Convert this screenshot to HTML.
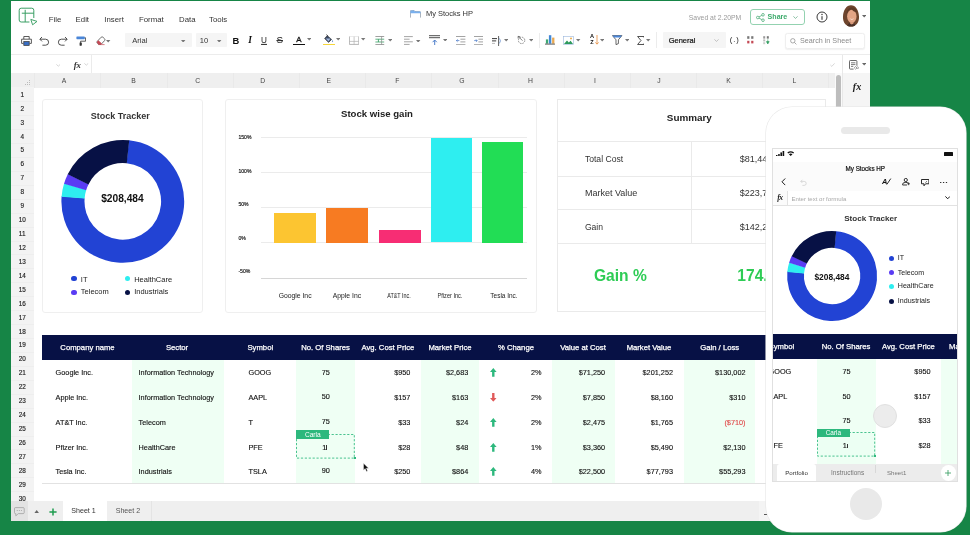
<!DOCTYPE html>
<html><head><meta charset="utf-8"><title>My Stocks HP</title>
<style>
*{box-sizing:border-box;margin:0;padding:0}
html,body{width:970px;height:535px;overflow:hidden}
body{background:#168546;font-family:"Liberation Sans",sans-serif;position:relative;color:#222}
.a{position:absolute}
.t{position:absolute;line-height:1;white-space:nowrap}
.c{transform:translate(-50%,-50%)}
.l{transform:translate(0,-50%)}
.r{transform:translate(-100%,-50%)}
.b{font-weight:bold}
#win{position:absolute;left:11px;top:1.3px;width:859px;height:519.4px;background:#fff;overflow:hidden}
#stage{will-change:transform;position:absolute;left:-11px;top:-1.3px;width:970px;height:535px}
.menu{font-size:7.8px;color:#333}
.rn{font-size:6.4px;color:#222;-webkit-text-stroke-width:0.15px}
.cn{font-size:6.8px;color:#444}
.card{position:absolute;background:#fff;border:1px solid #efefef;border-radius:3px}
.th{font-size:7.7px;color:#fff;-webkit-text-stroke-width:0.25px}
.td{font-size:7.3px;color:#111;-webkit-text-stroke-width:0.12px}
.lg{font-size:7.5px;color:#222}
.xl{font-size:6.8px;color:#222}
.yl{font-size:5.1px;color:#111;-webkit-text-stroke-width:0.15px}
.sm{font-size:8.6px;color:#333}
.pt{font-size:6.3px;color:#111;-webkit-text-stroke-width:0.2px}
</style></head>
<body>
<div id="win"><div id="stage">
<svg class="a" style="left:17.5px;top:7px;" width="20" height="19" viewBox="0 0 20 19">
<rect x="1.2" y="1.2" width="14.6" height="13.8" rx="2" fill="none" stroke="#3a9f64" stroke-width="1"/>
<path d="M3.8 6.2H15.8M7.2 2.8V15" stroke="#3a9f64" stroke-width="1" fill="none"/>
<rect x="11.4" y="11" width="8" height="7.6" fill="#fff"/>
<path d="M12.8 12.4L19 14.4L14.6 17.8z" fill="#fff" stroke="#3a9f64" stroke-width="0.95" stroke-linejoin="round"/>
</svg>
<div class="t l menu" style="left:48.7px;top:20px;">File</div>
<div class="t l menu" style="left:75.6px;top:20px;">Edit</div>
<div class="t l menu" style="left:104.3px;top:20px;">Insert</div>
<div class="t l menu" style="left:139px;top:20px;">Format</div>
<div class="t l menu" style="left:179px;top:20px;">Data</div>
<div class="t l menu" style="left:209px;top:20px;">Tools</div>
<svg class="a" style="left:410px;top:10px;" width="11" height="8" viewBox="0 0 11 8">
<path d="M0.4 7.6V1.2Q0.4 0.4 1.2 0.4H4L5 1.6H9.8Q10.6 1.6 10.6 2.4V7.6" fill="#fff" stroke="#7a8899" stroke-width="0.7"/>
<path d="M0.4 3.2V1.2Q0.4 0.4 1.2 0.4H4L5 1.6H9.8Q10.6 1.6 10.6 2.4V3.2z" fill="#79b0ee"/>
</svg>
<div class="t l " style="left:425.9px;top:14.2px;font-size:7.5px;color:#333">My Stocks HP</div>
<div class="t l " style="left:688.8px;top:18.4px;font-size:6.85px;color:#9a9a9a">Saved at 2.20PM</div>
<div class="a" style="left:750px;top:8.8px;width:55.4px;height:16.4px;border:0.8px solid #93d2b0;border-radius:3px;background:#fff"></div>
<svg class="a" style="left:756px;top:13px;" width="9" height="9" viewBox="0 0 9 9">
<circle cx="7" cy="1.8" r="1.3" fill="none" stroke="#3aa468" stroke-width="0.7"/>
<circle cx="7" cy="7.2" r="1.3" fill="none" stroke="#3aa468" stroke-width="0.7"/>
<circle cx="1.8" cy="4.5" r="1.3" fill="none" stroke="#3aa468" stroke-width="0.7"/>
<path d="M3 3.9L5.8 2.4M3 5.1L5.8 6.6" fill="none" stroke="#3aa468" stroke-width="0.7"/>
</svg>
<div class="t l b" style="left:767.6px;top:17.6px;font-size:7.1px;color:#3dab6c">Share</div>
<svg class="a" style="left:793.2px;top:16.2px;" width="5" height="3" viewBox="0 0 5 3"><path d="M0.4 0.4L2.5 2.4L4.6 0.4" fill="none" stroke="#5aa880" stroke-width="0.7"/></svg>
<svg class="a" style="left:816px;top:11.2px;" width="12" height="12" viewBox="0 0 12 12"><circle cx="6" cy="6" r="5" fill="none" stroke="#222" stroke-width="0.9"/>
<path d="M6 5.2V8.8" stroke="#222" stroke-width="1"/><circle cx="6" cy="3.5" r="0.65" fill="#222"/></svg>
<svg class="a" style="left:841.6px;top:4.6px;" width="18" height="22" viewBox="0 0 18 22">
<defs><clipPath id="av"><path d="M9 0.3C13.6 0.3 16.6 5 17 11.4C17.4 17.6 13.6 21.6 9 21.6C4.4 21.6 0.6 17.6 1 11.4C1.4 5 4.4 0.3 9 0.3z"/></clipPath></defs>
<g clip-path="url(#av)">
<rect width="18" height="22" fill="#6e452d"/>
<ellipse cx="9.8" cy="11.4" rx="4.7" ry="6.6" fill="#e3a585"/>
<path d="M4.6 10Q5.4 4.6 9.4 4.2Q11 6.6 15 7.4Q14.6 2.4 9.6 2.2Q4.4 2.6 4.6 10z" fill="#5e3a26"/>
<path d="M7.4 13.6Q9.8 15.8 12.4 13.6Q9.8 14.4 7.4 13.6z" fill="#fbeee8"/>
<path d="M5 22Q5.4 18.4 8.4 17.8L9.8 18.8L11.4 17.8Q13.6 18.6 13.8 22z" fill="#4a3128"/>
<path d="M8.2 16.8Q9.8 18 11.4 16.8L11.6 18.6L9.8 19.6L8 18.6z" fill="#d89878"/>
</g></svg>
<svg class="a" style="left:861.8px;top:15.0px;" width="4.4" height="2.6" viewBox="0 0 4.4 2.6"><path d="M0 0h4.4L2.2 2.6z" fill="#666"/></svg>
<div class="a" style="left:11px;top:53.6px;width:859px;height:1px;background:#ececec"></div>
<svg class="a" style="left:20.5px;top:35.5px;" width="11" height="10" viewBox="0 0 11 10">
<path d="M2.8 3V0.5H8.2V3" fill="none" stroke="#333" stroke-width="0.8"/>
<path d="M2.4 7.4H0.6V3.2H10.4V7.4H8.6" fill="none" stroke="#333" stroke-width="0.8"/>
<rect x="2.8" y="5.6" width="5.4" height="3.8" fill="#3a6fc4" stroke="#333" stroke-width="0.7"/></svg>
<svg class="a" style="left:38.5px;top:35.8px;" width="11" height="10" viewBox="0 0 11 10"><path d="M1 3.2H6.6A3 3 0 0 1 6.6 9.2H3.4" fill="none" stroke="#333" stroke-width="0.85"/>
<path d="M3 1L0.8 3.2L3 5.4" fill="none" stroke="#333" stroke-width="0.85"/></svg>
<svg class="a" style="left:56.8px;top:35.8px;" width="11" height="10" viewBox="0 0 11 10"><path d="M10 3.2H4.4A3 3 0 0 0 4.4 9.2H7.6" fill="none" stroke="#333" stroke-width="0.85"/>
<path d="M8 1L10.2 3.2L8 5.4" fill="none" stroke="#333" stroke-width="0.85"/></svg>
<svg class="a" style="left:75.6px;top:35.6px;" width="10" height="10" viewBox="0 0 10 10"><rect x="0.4" y="0.4" width="8.4" height="2.8" rx="0.6" fill="#4a86d8"/>
<path d="M8.8 1.8H9.6V5.2H4.6V9.6" fill="none" stroke="#333" stroke-width="0.8"/>
<path d="M3.6 6.6H5.8V9.6H3.6z" fill="#333"/></svg>
<svg class="a" style="left:96.2px;top:35.6px;" width="10" height="10" viewBox="0 0 10 10"><path d="M5.2 1.2Q6 0.4 6.9 1.2L8.6 2.8Q9.4 3.7 8.6 4.6L5 8.4H2.6L1.2 7Q0.6 6.2 1.2 5.4z" fill="#fff" stroke="#444" stroke-width="0.75" stroke-linejoin="round"/>
<path d="M2.4 4.2L5.8 7.4L5 8.4H2.6L1.2 7Q0.6 6.2 1.2 5.4z" fill="#c44a55"/>
<path d="M2.4 8.6H8.6" stroke="#c44a55" stroke-width="0.7"/></svg>
<svg class="a" style="left:106.3px;top:40.0px;" width="4.4" height="2.6" viewBox="0 0 4.4 2.6"><path d="M0 0h4.4L2.2 2.6z" fill="#777"/></svg>
<div class="a" style="left:125.3px;top:32.9px;width:67.1px;height:14.6px;background:#f5f5f5;border-radius:1px"></div>
<div class="t l " style="left:132.2px;top:40.7px;font-size:7.6px;color:#333">Arial</div>
<svg class="a" style="left:181.4px;top:39.8px;" width="4.4" height="2.6" viewBox="0 0 4.4 2.6"><path d="M0 0h4.4L2.2 2.6z" fill="#777"/></svg>
<div class="a" style="left:196.2px;top:32.9px;width:31.2px;height:14.6px;background:#f5f5f5;border-radius:1px"></div>
<div class="t l " style="left:199.8px;top:40.7px;font-size:7.6px;color:#333">10</div>
<svg class="a" style="left:217.4px;top:39.8px;" width="4.4" height="2.6" viewBox="0 0 4.4 2.6"><path d="M0 0h4.4L2.2 2.6z" fill="#777"/></svg>
<div class="t c b" style="left:236px;top:40.8px;font-size:9.4px;color:#111">B</div>
<div class="t c " style="left:250px;top:41.4px;font-size:9.4px;color:#111;font-style:italic;font-family:'Liberation Serif',serif;font-weight:bold">I</div>
<div class="t c " style="left:264px;top:40.6px;font-size:8.2px;color:#222;text-decoration:underline">U</div>
<div class="t c " style="left:279.7px;top:40.4px;font-size:9.8px;color:#222;text-decoration:line-through">S</div>
<div class="t c " style="left:298.8px;top:39.5px;font-size:7.9px;color:#111;-webkit-text-stroke:0.3px #111">A</div>
<div class="a" style="left:292.9px;top:43.5px;width:12.3px;height:1.8px;background:#111"></div>
<svg class="a" style="left:306.5px;top:38.0px;" width="4.4" height="2.6" viewBox="0 0 4.4 2.6"><path d="M0 0h4.4L2.2 2.6z" fill="#777"/></svg>
<svg class="a" style="left:322.5px;top:33.5px;" width="13" height="10" viewBox="0 0 13 10"><path d="M4.2 1.6L8.6 5.4L5.6 8.4L1.6 4.6z" fill="#3b4a66" stroke="#333" stroke-width="0.6" stroke-linejoin="round"/>
<path d="M3.4 0.6L5 2.2" stroke="#333" stroke-width="0.8"/>
<path d="M2.6 4.4L7.4 4.6L5.6 7.4z" fill="#9fb4d8"/>
<path d="M9.6 6Q10.6 7.6 9.6 8.2Q8.6 7.6 9.6 6z" fill="#3a6fc4"/></svg>
<div class="a" style="left:322.7px;top:43.9px;width:12.3px;height:1.4px;background:#f5d63a"></div>
<svg class="a" style="left:335.7px;top:38.0px;" width="4.4" height="2.6" viewBox="0 0 4.4 2.6"><path d="M0 0h4.4L2.2 2.6z" fill="#777"/></svg>
<svg class="a" style="left:348.8px;top:36.2px;" width="10.2" height="8.8" viewBox="0 0 10.2 8.8"><path d="M0.4 0.4V8.4H9.8V0.4" fill="none" stroke="#a2a2a2" stroke-width="0.8"/>
<path d="M0.4 5.4H9.8M5.1 0.4V8.4" stroke="#b0b0b0" stroke-width="0.7"/><path d="M0.4 0.4H9.8" stroke="#d8d8d8" stroke-width="0.6"/></svg>
<svg class="a" style="left:361.40000000000003px;top:38.4px;" width="4.4" height="2.6" viewBox="0 0 4.4 2.6"><path d="M0 0h4.4L2.2 2.6z" fill="#777"/></svg>
<svg class="a" style="left:375px;top:36px;" width="9.6" height="9" viewBox="0 0 9.6 9"><path d="M0.4 0.5H9.2M0.4 8.5H9.2" stroke="#777" stroke-width="0.7"/>
<path d="M0.4 3.2H9.2M0.4 6H9.2" stroke="#3a9f64" stroke-width="0.8"/>
<path d="M6.6 0.5V8.5" stroke="#888" stroke-width="0.7"/><path d="M3.4 3.2V6" stroke="#3a9f64" stroke-width="0.9"/></svg>
<svg class="a" style="left:387.8px;top:39.4px;" width="4.4" height="2.6" viewBox="0 0 4.4 2.6"><path d="M0 0h4.4L2.2 2.6z" fill="#777"/></svg>
<svg class="a" style="left:404.2px;top:36px;" width="9" height="9" viewBox="0 0 9 9"><path d="M0 0.6H8.8M0 3.2H5.6M0 5.8H8.8M0 8.4H5.6" stroke="#9a9a9a" stroke-width="0.9"/></svg>
<svg class="a" style="left:416.40000000000003px;top:39.599999999999994px;" width="4.4" height="2.6" viewBox="0 0 4.4 2.6"><path d="M0 0h4.4L2.2 2.6z" fill="#777"/></svg>
<svg class="a" style="left:429px;top:34.8px;" width="11.4" height="10.6" viewBox="0 0 11.4 10.6"><path d="M0 0.7H11.4M0 2.7H11.4" stroke="#111" stroke-width="0.75"/>
<path d="M5.7 10.2V5.4M3.6 7.2L5.7 5L7.8 7.2" fill="none" stroke="#3a6fc4" stroke-width="0.9"/></svg>
<svg class="a" style="left:442.8px;top:38.8px;" width="4.4" height="2.6" viewBox="0 0 4.4 2.6"><path d="M0 0h4.4L2.2 2.6z" fill="#777"/></svg>
<svg class="a" style="left:456px;top:35.6px;" width="9.6" height="9.4" viewBox="0 0 9.6 9.4"><path d="M0 0.5H9.4M4.4 3.2H9.4M4.4 5.9H9.4M0 8.7H9.4" stroke="#8a8a8a" stroke-width="0.8"/>
<path d="M3.4 4.6H0.4M1.6 3.4L0.4 4.6L1.6 5.8" fill="none" stroke="#3a6fc4" stroke-width="0.7"/></svg>
<svg class="a" style="left:473.9px;top:35.6px;" width="9.6" height="9.4" viewBox="0 0 9.6 9.4"><path d="M0 0.5H9.4M4.4 3.2H9.4M4.4 5.9H9.4M0 8.7H9.4" stroke="#8a8a8a" stroke-width="0.8"/>
<path d="M0.2 4.6H3.2M2 3.4L3.2 4.6L2 5.8" fill="none" stroke="#3a6fc4" stroke-width="0.7"/></svg>
<svg class="a" style="left:491.5px;top:35.6px;" width="10" height="10" viewBox="0 0 10 10"><path d="M0 2.6H5M0 4.9H4.2" stroke="#222" stroke-width="0.9"/><path d="M0 7.4H3" stroke="#aaa" stroke-width="0.8"/>
<path d="M6.6 0V10" stroke="#333" stroke-width="0.8"/><path d="M7.4 2.4Q9.6 4.8 7.4 7.4" fill="none" stroke="#5a88c8" stroke-width="0.7"/></svg>
<svg class="a" style="left:504.0px;top:39.0px;" width="4.4" height="2.6" viewBox="0 0 4.4 2.6"><path d="M0 0h4.4L2.2 2.6z" fill="#777"/></svg>
<svg class="a" style="left:517px;top:35.4px;" width="9.4" height="9.6" viewBox="0 0 9.4 9.6"><circle cx="4.6" cy="5.4" r="3.2" fill="none" stroke="#666" stroke-width="0.7" stroke-dasharray="1.6 0.9"/>
<path d="M1 1.4L5.6 5.6M1 1.4L1.2 3.6M1 1.4L3.2 1.6" fill="none" stroke="#555" stroke-width="0.7"/></svg>
<svg class="a" style="left:528.8px;top:39.0px;" width="4.4" height="2.6" viewBox="0 0 4.4 2.6"><path d="M0 0h4.4L2.2 2.6z" fill="#777"/></svg>
<div class="a" style="left:539.2px;top:33px;width:1px;height:15px;background:#ececec"></div>
<svg class="a" style="left:545px;top:35.2px;" width="10" height="9.6" viewBox="0 0 10 9.6"><rect x="0.9" y="4.4" width="2.3" height="4.2" fill="#3fa872"/><rect x="3.9" y="0.2" width="2.4" height="8.4" fill="#4288d6"/><rect x="7.1" y="2.6" width="2.3" height="6" fill="#e8a850"/>
<path d="M0 9.1H10" stroke="#333" stroke-width="0.8"/></svg>
<svg class="a" style="left:563.4px;top:36px;" width="11" height="9" viewBox="0 0 11 9"><rect x="0.4" y="0.4" width="10.2" height="8" fill="#fff" stroke="#9ab6dc" stroke-width="0.6"/>
<path d="M1 8L4 4.6L5.8 6.4L7.6 4.8L10 8z" fill="#2e9a5c"/><circle cx="8" cy="2.4" r="0.9" fill="#e6a03a"/></svg>
<svg class="a" style="left:576.4px;top:39.199999999999996px;" width="4.4" height="2.6" viewBox="0 0 4.4 2.6"><path d="M0 0h4.4L2.2 2.6z" fill="#777"/></svg>
<div class="t c b" style="left:592px;top:37.4px;font-size:5.6px;color:#111">A</div>
<div class="t c b" style="left:592px;top:43px;font-size:5.6px;color:#111">Z</div>
<svg class="a" style="left:594.6px;top:35.4px;" width="4" height="10" viewBox="0 0 4 10"><path d="M2 0V9M0.4 7.4L2 9.2L3.6 7.4" fill="none" stroke="#e68a3a" stroke-width="0.8"/></svg>
<svg class="a" style="left:600.0px;top:39.199999999999996px;" width="4.4" height="2.6" viewBox="0 0 4.4 2.6"><path d="M0 0h4.4L2.2 2.6z" fill="#777"/></svg>
<svg class="a" style="left:612.4px;top:35.4px;" width="10.4" height="10" viewBox="0 0 10.4 10"><path d="M0.5 0.6H9.9L6.4 4.8V8.6L4 9.6V4.8z" fill="#fff" stroke="#333" stroke-width="0.75" stroke-linejoin="round"/>
<path d="M0.5 0.6H9.9L8.4 2.4H2z" fill="#4a86d8"/></svg>
<svg class="a" style="left:624.5999999999999px;top:39.0px;" width="4.4" height="2.6" viewBox="0 0 4.4 2.6"><path d="M0 0h4.4L2.2 2.6z" fill="#777"/></svg>
<svg class="a" style="left:637px;top:36px;" width="7.4" height="9" viewBox="0 0 7.4 9"><path d="M7 1.6V0.5H0.6L4 4.5L0.6 8.5H7V7.4" fill="none" stroke="#333" stroke-width="0.85" stroke-linejoin="round"/></svg>
<svg class="a" style="left:646.4px;top:39.199999999999996px;" width="4.4" height="2.6" viewBox="0 0 4.4 2.6"><path d="M0 0h4.4L2.2 2.6z" fill="#777"/></svg>
<div class="a" style="left:656.2px;top:32px;width:1px;height:16px;background:#ececec"></div>
<div class="a" style="left:662.6px;top:32.4px;width:63.1px;height:15.2px;background:#f5f5f5;border-radius:1px"></div>
<div class="t l " style="left:668.7px;top:40.9px;font-size:7.5px;color:#111;-webkit-text-stroke-width:0.2px">General</div>
<svg class="a" style="left:713.6px;top:39.2px;" width="5" height="3" viewBox="0 0 5 3"><path d="M0.4 0.4L2.5 2.4L4.6 0.4" fill="none" stroke="#aaa" stroke-width="0.7"/></svg>
<div class="t c " style="left:734.8px;top:40.2px;font-size:7.6px;color:#222;letter-spacing:0.9px">(.)</div>
<svg class="a" style="left:746.8px;top:36.4px;" width="7" height="8" viewBox="0 0 7 8"><rect x="0.2" y="0.2" width="2.2" height="2.6" fill="#777"/><rect x="4.2" y="0.2" width="2.2" height="2.6" fill="#777"/>
<rect x="0.2" y="4.8" width="2.2" height="2.6" fill="#c44a55"/><rect x="4.2" y="4.8" width="2.2" height="2.6" fill="#c44a55"/></svg>
<svg class="a" style="left:763.4px;top:36px;" width="7" height="9" viewBox="0 0 7 9"><rect x="0.2" y="0.2" width="2" height="2.4" fill="#999"/><rect x="3.8" y="0.2" width="2" height="2.4" fill="#777"/>
<rect x="0.2" y="3.4" width="2" height="2" fill="#bbb"/><rect x="0.2" y="6.2" width="2" height="2" fill="#ccc"/>
<path d="M4.8 3.4V6M3.4 5.6H6.2L4.8 8z" fill="#2e9a5c" stroke="#2e9a5c" stroke-width="0.6"/></svg>
<div class="a" style="left:784.8px;top:33.3px;width:80.4px;height:15.4px;background:#fff;border:1px solid #efefef;border-radius:2.5px;box-shadow:0 0.5px 1.2px rgba(0,0,0,0.06)"></div>
<svg class="a" style="left:789.6px;top:37.8px;" width="7" height="7" viewBox="0 0 7 7"><circle cx="2.8" cy="2.8" r="2.2" fill="none" stroke="#888" stroke-width="0.7"/><path d="M4.4 4.4L6.4 6.4" stroke="#888" stroke-width="0.7"/></svg>
<div class="t l " style="left:800px;top:41.2px;font-size:7.2px;color:#8a8a8a">Search in Sheet</div>
<svg class="a" style="left:55.8px;top:63.6px;" width="4.6" height="3" viewBox="0 0 4.6 3"><path d="M0.4 0.4L2.3 2.2L4.2 0.4" fill="none" stroke="#bbb" stroke-width="0.6"/></svg>
<div class="t c " style="left:77.2px;top:64.9px;font-size:8.8px;color:#333;font-style:italic;font-weight:bold;font-family:'Liberation Serif',serif;letter-spacing:-0.2px">fx</div>
<svg class="a" style="left:84.2px;top:63.4px;" width="4.6" height="3" viewBox="0 0 4.6 3"><path d="M0.4 0.4L2.3 2.2L4.2 0.4" fill="none" stroke="#bbb" stroke-width="0.6"/></svg>
<div class="a" style="left:91.2px;top:54.6px;width:1px;height:18.4px;background:#ebebeb"></div>
<svg class="a" style="left:830.4px;top:62.8px;" width="5" height="4" viewBox="0 0 5 4"><path d="M0.4 2L1.8 3.4L4.6 0.4" fill="none" stroke="#bdbdbd" stroke-width="0.6"/></svg>
<div class="a" style="left:842.4px;top:73px;width:27.6px;height:428px;background:#f5f5f5"></div>
<div class="a" style="left:842px;top:54.6px;width:1px;height:446.4px;background:#e8e8e8"></div>
<svg class="a" style="left:848.6px;top:60px;" width="10" height="10" viewBox="0 0 10 10"><rect x="0.5" y="0.5" width="7.4" height="8.6" rx="0.8" fill="#fff" stroke="#444" stroke-width="0.8"/>
<path d="M2 2.8H6.4M2 4.6H6.4M2 6.4H4.4" stroke="#444" stroke-width="0.7"/>
<rect x="4.6" y="5.8" width="5.4" height="4.2" fill="#fff"/>
<path d="M5.2 7.8L6.6 6.4L8 7.8L6.6 9.2zM7.4 7.8L8.6 6.6L9.8 7.8L8.6 9z" fill="none" stroke="#555" stroke-width="0.5"/></svg>
<svg class="a" style="left:861.8px;top:63.39999999999999px;" width="4.4" height="2.6" viewBox="0 0 4.4 2.6"><path d="M0 0h4.4L2.2 2.6z" fill="#666"/></svg>
<div class="t c " style="left:857.2px;top:86.6px;font-size:10.2px;color:#222;font-style:italic;font-weight:bold;font-family:'Liberation Serif',serif;letter-spacing:0.3px">fx</div>
<div class="a" style="left:11px;top:73px;width:824px;height:14.6px;background:#efefef"></div>
<div class="a" style="left:11px;top:87.2px;width:23.2px;height:414px;background:#f3f3f3"></div>
<svg class="a" style="left:24.6px;top:80.2px;" width="6" height="5" viewBox="0 0 6 5"><g fill="#bbb"><rect x="4" y="0" width="1" height="1"/><rect x="2" y="2" width="1" height="1"/><rect x="4" y="2" width="1" height="1"/><rect x="0" y="4" width="1" height="1"/><rect x="2" y="4" width="1" height="1"/><rect x="4" y="4" width="1" height="1"/></g></svg>
<div class="a" style="left:34.2px;top:73px;width:1px;height:14.6px;background:#e9e9e9"></div>
<div class="a" style="left:100.4px;top:73px;width:1px;height:14.6px;background:#e9e9e9"></div>
<div class="a" style="left:166.6px;top:73px;width:1px;height:14.6px;background:#e9e9e9"></div>
<div class="a" style="left:232.7px;top:73px;width:1px;height:14.6px;background:#e9e9e9"></div>
<div class="a" style="left:298.9px;top:73px;width:1px;height:14.6px;background:#e9e9e9"></div>
<div class="a" style="left:365.1px;top:73px;width:1px;height:14.6px;background:#e9e9e9"></div>
<div class="a" style="left:431.3px;top:73px;width:1px;height:14.6px;background:#e9e9e9"></div>
<div class="a" style="left:497.5px;top:73px;width:1px;height:14.6px;background:#e9e9e9"></div>
<div class="a" style="left:563.6px;top:73px;width:1px;height:14.6px;background:#e9e9e9"></div>
<div class="a" style="left:629.8px;top:73px;width:1px;height:14.6px;background:#e9e9e9"></div>
<div class="a" style="left:696.0px;top:73px;width:1px;height:14.6px;background:#e9e9e9"></div>
<div class="a" style="left:762.2px;top:73px;width:1px;height:14.6px;background:#e9e9e9"></div>
<div class="a" style="left:828.4px;top:73px;width:1px;height:14.6px;background:#e9e9e9"></div>
<div class="t c cn" style="left:64px;top:80.9px;">A</div>
<div class="t c cn" style="left:133.5px;top:80.9px;">B</div>
<div class="t c cn" style="left:197.8px;top:80.9px;">C</div>
<div class="t c cn" style="left:262.8px;top:80.9px;">D</div>
<div class="t c cn" style="left:328.7px;top:80.9px;">E</div>
<div class="t c cn" style="left:397.3px;top:80.9px;">F</div>
<div class="t c cn" style="left:462px;top:80.9px;">G</div>
<div class="t c cn" style="left:530.5px;top:80.9px;">H</div>
<div class="t c cn" style="left:595px;top:80.9px;">I</div>
<div class="t c cn" style="left:659px;top:80.9px;">J</div>
<div class="t c cn" style="left:728.5px;top:80.9px;">K</div>
<div class="t c cn" style="left:794.5px;top:80.9px;">L</div>
<div class="t c rn" style="left:22.2px;top:94.7px;">1</div>
<div class="a" style="left:11px;top:101.2px;width:23.2px;height:1px;background:#eeeeee"></div>
<div class="t c rn" style="left:22.2px;top:108.6px;">2</div>
<div class="a" style="left:11px;top:115.1px;width:23.2px;height:1px;background:#eeeeee"></div>
<div class="t c rn" style="left:22.2px;top:122.6px;">3</div>
<div class="a" style="left:11px;top:129.1px;width:23.2px;height:1px;background:#eeeeee"></div>
<div class="t c rn" style="left:22.2px;top:136.5px;">4</div>
<div class="a" style="left:11px;top:143.0px;width:23.2px;height:1px;background:#eeeeee"></div>
<div class="t c rn" style="left:22.2px;top:150.4px;">5</div>
<div class="a" style="left:11px;top:156.9px;width:23.2px;height:1px;background:#eeeeee"></div>
<div class="t c rn" style="left:22.2px;top:164.4px;">6</div>
<div class="a" style="left:11px;top:170.9px;width:23.2px;height:1px;background:#eeeeee"></div>
<div class="t c rn" style="left:22.2px;top:178.3px;">7</div>
<div class="a" style="left:11px;top:184.8px;width:23.2px;height:1px;background:#eeeeee"></div>
<div class="t c rn" style="left:22.2px;top:192.2px;">8</div>
<div class="a" style="left:11px;top:198.7px;width:23.2px;height:1px;background:#eeeeee"></div>
<div class="t c rn" style="left:22.2px;top:206.1px;">9</div>
<div class="a" style="left:11px;top:212.6px;width:23.2px;height:1px;background:#eeeeee"></div>
<div class="t c rn" style="left:22.2px;top:220.1px;">10</div>
<div class="a" style="left:11px;top:226.6px;width:23.2px;height:1px;background:#eeeeee"></div>
<div class="t c rn" style="left:22.2px;top:234.0px;">11</div>
<div class="a" style="left:11px;top:240.5px;width:23.2px;height:1px;background:#eeeeee"></div>
<div class="t c rn" style="left:22.2px;top:247.9px;">12</div>
<div class="a" style="left:11px;top:254.4px;width:23.2px;height:1px;background:#eeeeee"></div>
<div class="t c rn" style="left:22.2px;top:261.9px;">13</div>
<div class="a" style="left:11px;top:268.4px;width:23.2px;height:1px;background:#eeeeee"></div>
<div class="t c rn" style="left:22.2px;top:275.8px;">14</div>
<div class="a" style="left:11px;top:282.3px;width:23.2px;height:1px;background:#eeeeee"></div>
<div class="t c rn" style="left:22.2px;top:289.7px;">15</div>
<div class="a" style="left:11px;top:296.2px;width:23.2px;height:1px;background:#eeeeee"></div>
<div class="t c rn" style="left:22.2px;top:303.6px;">16</div>
<div class="a" style="left:11px;top:310.1px;width:23.2px;height:1px;background:#eeeeee"></div>
<div class="t c rn" style="left:22.2px;top:317.6px;">17</div>
<div class="a" style="left:11px;top:324.1px;width:23.2px;height:1px;background:#eeeeee"></div>
<div class="t c rn" style="left:22.2px;top:331.5px;">18</div>
<div class="a" style="left:11px;top:338.0px;width:23.2px;height:1px;background:#eeeeee"></div>
<div class="t c rn" style="left:22.2px;top:345.4px;">19</div>
<div class="a" style="left:11px;top:351.9px;width:23.2px;height:1px;background:#eeeeee"></div>
<div class="t c rn" style="left:22.2px;top:359.4px;">20</div>
<div class="a" style="left:11px;top:365.9px;width:23.2px;height:1px;background:#eeeeee"></div>
<div class="t c rn" style="left:22.2px;top:373.3px;">21</div>
<div class="a" style="left:11px;top:379.8px;width:23.2px;height:1px;background:#eeeeee"></div>
<div class="t c rn" style="left:22.2px;top:387.2px;">22</div>
<div class="a" style="left:11px;top:393.7px;width:23.2px;height:1px;background:#eeeeee"></div>
<div class="t c rn" style="left:22.2px;top:401.2px;">23</div>
<div class="a" style="left:11px;top:407.7px;width:23.2px;height:1px;background:#eeeeee"></div>
<div class="t c rn" style="left:22.2px;top:415.1px;">24</div>
<div class="a" style="left:11px;top:421.6px;width:23.2px;height:1px;background:#eeeeee"></div>
<div class="t c rn" style="left:22.2px;top:429.0px;">25</div>
<div class="a" style="left:11px;top:435.5px;width:23.2px;height:1px;background:#eeeeee"></div>
<div class="t c rn" style="left:22.2px;top:442.9px;">26</div>
<div class="a" style="left:11px;top:449.4px;width:23.2px;height:1px;background:#eeeeee"></div>
<div class="t c rn" style="left:22.2px;top:456.9px;">27</div>
<div class="a" style="left:11px;top:463.4px;width:23.2px;height:1px;background:#eeeeee"></div>
<div class="t c rn" style="left:22.2px;top:470.8px;">28</div>
<div class="a" style="left:11px;top:477.3px;width:23.2px;height:1px;background:#eeeeee"></div>
<div class="t c rn" style="left:22.2px;top:484.7px;">29</div>
<div class="a" style="left:11px;top:491.2px;width:23.2px;height:1px;background:#eeeeee"></div>
<div class="t c rn" style="left:22.2px;top:498.7px;">30</div>
<div class="a" style="left:11px;top:505.2px;width:23.2px;height:1px;background:#eeeeee"></div>
<div class="a" style="left:835px;top:73px;width:7px;height:428px;background:#fafafa"></div>
<div class="a" style="left:836px;top:75.2px;width:5px;height:470px;background:#bdbdbd;border-radius:2.5px"></div>
<div class="card" style="left:42.4px;top:98.8px;width:160.8px;height:214px"></div>
<div class="t c b" style="left:120.2px;top:115.6px;font-size:9px;color:#333">Stock Tracker</div>
<svg class="a" style="left:0;top:0" width="970" height="535"><path d="M128.90 140.30A61.4 61.4 0 1 1 61.62 196.26L84.63 198.20A38.3 38.3 0 1 0 126.60 163.29z" fill="#2243d4"/><path d="M61.58 196.69A61.4 61.4 0 0 1 64.15 183.24L86.21 190.07A38.3 38.3 0 0 0 84.61 198.46z" fill="#2eeef0"/><path d="M64.02 183.65A61.4 61.4 0 0 1 67.90 173.91L88.55 184.25A38.3 38.3 0 0 0 86.13 190.33z" fill="#5a3cf4"/><path d="M67.71 174.29A61.4 61.4 0 0 1 129.22 140.34L126.80 163.31A38.3 38.3 0 0 0 88.44 184.49z" fill="#071145"/></svg>
<div class="t c b" style="left:122.4px;top:198.8px;font-size:10.2px;color:#111">$208,484</div>
<div class="a" style="left:71.4px;top:276.1px;width:5.4px;height:5.4px;background:#2243d4;border-radius:50%"></div>
<div class="t l lg" style="left:80.8px;top:279.8px;">IT</div>
<div class="a" style="left:71.4px;top:289.6px;width:5.4px;height:5.4px;background:#5a3cf4;border-radius:50%"></div>
<div class="t l lg" style="left:80.8px;top:292.2px;">Telecom</div>
<div class="a" style="left:124.5px;top:276.1px;width:5.4px;height:5.4px;background:#2eeef0;border-radius:50%"></div>
<div class="t l lg" style="left:134.2px;top:279.8px;">HealthCare</div>
<div class="a" style="left:124.5px;top:289.6px;width:5.4px;height:5.4px;background:#071145;border-radius:50%"></div>
<div class="t l lg" style="left:134.2px;top:292.2px;">Industrials</div>
<div class="card" style="left:224.6px;top:98.8px;width:312px;height:214px"></div>
<div class="t c b" style="left:377px;top:113.9px;font-size:9.6px;color:#222">Stock wise gain</div>
<div class="a" style="left:260.8px;top:136.7px;width:266px;height:1px;background:#ebebeb"></div>
<div class="a" style="left:260.8px;top:171.9px;width:266px;height:1px;background:#ebebeb"></div>
<div class="a" style="left:260.8px;top:206.7px;width:266px;height:1px;background:#ebebeb"></div>
<div class="a" style="left:260.8px;top:241.8px;width:266px;height:1px;background:#ebebeb"></div>
<div class="a" style="left:260.8px;top:277.5px;width:266px;height:1px;background:#d6d6d6"></div>
<div class="t l yl" style="left:238.4px;top:137.5px;">150%</div>
<div class="t l yl" style="left:238.4px;top:172px;">100%</div>
<div class="t l yl" style="left:238.4px;top:205.1px;">50%</div>
<div class="t l yl" style="left:238.4px;top:239px;">0%</div>
<div class="t l yl" style="left:238.4px;top:272.2px;">-50%</div>
<div class="a" style="left:274.3px;top:212.7px;width:41.7px;height:29.9px;background:#fcc531"></div>
<div class="a" style="left:325.9px;top:207.6px;width:42.1px;height:35.0px;background:#f77b22"></div>
<div class="a" style="left:379px;top:229.8px;width:42.1px;height:12.8px;background:#f72d74"></div>
<div class="a" style="left:430.9px;top:138px;width:41.1px;height:103.8px;background:#2eeef0"></div>
<div class="a" style="left:482px;top:142.1px;width:41.1px;height:100.5px;background:#22dd55"></div>
<div class="t c xl" style="left:295.1px;top:295.8px;">Google Inc</div>
<div class="t c xl" style="left:346.9px;top:295.8px;">Apple Inc</div>
<div class="t c xl" style="left:399.4px;top:295.8px;transform:translate(-50%,-50%) scaleX(0.8)">AT&amp;T Inc.</div>
<div class="t c xl" style="left:450.2px;top:295.8px;transform:translate(-50%,-50%) scaleX(0.82)">Pfizer Inc.</div>
<div class="t c xl" style="left:503.5px;top:295.8px;transform:translate(-50%,-50%) scaleX(0.95)">Tesla Inc.</div>
<div class="card" style="left:556.8px;top:99px;width:269px;height:213.2px;border-radius:0;border-color:#eaeaea"></div>
<div class="a" style="left:557.3px;top:140.7px;width:268px;height:1px;background:#eaeaea"></div>
<div class="a" style="left:557.3px;top:175.8px;width:268px;height:1px;background:#eaeaea"></div>
<div class="a" style="left:557.3px;top:208.9px;width:268px;height:1px;background:#eaeaea"></div>
<div class="a" style="left:557.3px;top:242.9px;width:268px;height:1px;background:#eaeaea"></div>
<div class="a" style="left:691.1px;top:141.2px;width:1px;height:102.2px;background:#eaeaea"></div>
<div class="t c b" style="left:689.3px;top:117.5px;font-size:9.9px;color:#222">Summary</div>
<div class="t l sm" style="left:584.9px;top:159px;">Total Cost</div>
<div class="t l " style="left:739.7px;top:159px;font-size:9px;color:#333">$81,440</div>
<div class="t l sm" style="left:584.9px;top:192.7px;font-size:9px">Market Value</div>
<div class="t l " style="left:739.7px;top:192.7px;font-size:9px;color:#333">$223,705</div>
<div class="t l sm" style="left:584.9px;top:227.3px;">Gain</div>
<div class="t l " style="left:739.7px;top:227.3px;font-size:9px;color:#333">$142,265</div>
<div class="t l b" style="left:593.9px;top:275.6px;font-size:15.6px;color:#2ecc55">Gain %</div>
<div class="t l b" style="left:737.3px;top:275.6px;font-size:15.6px;color:#2ecc55">174.69%</div>
<div class="a" style="left:132px;top:360px;width:92px;height:123.3px;background:#effff4"></div>
<div class="a" style="left:296.4px;top:360px;width:58.8px;height:123.3px;background:#effff4"></div>
<div class="a" style="left:420.9px;top:360px;width:58.5px;height:123.3px;background:#effff4"></div>
<div class="a" style="left:551.8px;top:360px;width:62.8px;height:123.3px;background:#effff4"></div>
<div class="a" style="left:683.6px;top:360px;width:71.4px;height:123.3px;background:#effff4"></div>
<div class="a" style="left:42px;top:335px;width:830px;height:25.1px;background:#071145"></div>
<div class="a" style="left:42px;top:483px;width:830px;height:1px;background:#e2e2e2"></div>
<div class="t c th" style="left:87.5px;top:347.5px;">Company name</div>
<div class="t c th" style="left:177px;top:347.5px;">Sector</div>
<div class="t c th" style="left:260.3px;top:347.5px;">Symbol</div>
<div class="t c th" style="left:325.5px;top:347.5px;">No. Of Shares</div>
<div class="t c th" style="left:387.9px;top:347.5px;">Avg. Cost Price</div>
<div class="t c th" style="left:450px;top:347.5px;">Market Price</div>
<div class="t c th" style="left:516px;top:347.5px;">% Change</div>
<div class="t c th" style="left:583px;top:347.5px;">Value at Cost</div>
<div class="t c th" style="left:649px;top:347.5px;">Market Value</div>
<div class="t c th" style="left:719.7px;top:347.5px;">Gain / Loss</div>
<div class="t l td" style="left:55.6px;top:373.1px;">Google Inc.</div>
<div class="t l td" style="left:55.6px;top:398px;">Apple Inc.</div>
<div class="t l td" style="left:55.6px;top:422.9px;">AT&amp;T Inc.</div>
<div class="t l td" style="left:55.6px;top:447.8px;">Pfizer Inc.</div>
<div class="t l td" style="left:55.6px;top:471.9px;">Tesla Inc.</div>
<div class="t l td" style="left:138.6px;top:373.1px;">Information Technology</div>
<div class="t l td" style="left:138.6px;top:398px;">Information Technology</div>
<div class="t l td" style="left:138.6px;top:422.9px;">Telecom</div>
<div class="t l td" style="left:138.6px;top:447.8px;">HealthCare</div>
<div class="t l td" style="left:138.6px;top:471.9px;">Industrials</div>
<div class="t l td" style="left:248.5px;top:373.1px;">GOOG</div>
<div class="t l td" style="left:248.5px;top:398px;">AAPL</div>
<div class="t l td" style="left:248.5px;top:422.9px;">T</div>
<div class="t l td" style="left:248.5px;top:447.8px;">PFE</div>
<div class="t l td" style="left:248.5px;top:471.9px;">TSLA</div>
<div class="t c td" style="left:325.8px;top:372.5px;">75</div>
<div class="t c td" style="left:325.8px;top:397.4px;">50</div>
<div class="t c td" style="left:325.8px;top:422.29999999999995px;">75</div>
<div class="t c td" style="left:325.8px;top:447.2px;"></div>
<div class="t c td" style="left:325.8px;top:471.29999999999995px;">90</div>
<div class="t r td" style="left:410.4px;top:373.1px;">$950</div>
<div class="t r td" style="left:410.4px;top:398px;">$157</div>
<div class="t r td" style="left:410.4px;top:422.9px;">$33</div>
<div class="t r td" style="left:410.4px;top:447.8px;">$28</div>
<div class="t r td" style="left:410.4px;top:471.9px;">$250</div>
<div class="t r td" style="left:468.3px;top:373.1px;">$2,683</div>
<div class="t r td" style="left:468.3px;top:398px;">$163</div>
<div class="t r td" style="left:468.3px;top:422.9px;">$24</div>
<div class="t r td" style="left:468.3px;top:447.8px;">$48</div>
<div class="t r td" style="left:468.3px;top:471.9px;">$864</div>
<div class="t r td" style="left:541.6px;top:373.1px;">2%</div>
<div class="t r td" style="left:541.6px;top:398px;">2%</div>
<div class="t r td" style="left:541.6px;top:422.9px;">2%</div>
<div class="t r td" style="left:541.6px;top:447.8px;">1%</div>
<div class="t r td" style="left:541.6px;top:471.9px;">4%</div>
<div class="t r td" style="left:605.1px;top:373.1px;">$71,250</div>
<div class="t r td" style="left:605.1px;top:398px;">$7,850</div>
<div class="t r td" style="left:605.1px;top:422.9px;">$2,475</div>
<div class="t r td" style="left:605.1px;top:447.8px;">$3,360</div>
<div class="t r td" style="left:605.1px;top:471.9px;">$22,500</div>
<div class="t r td" style="left:673px;top:373.1px;">$201,252</div>
<div class="t r td" style="left:673px;top:398px;">$8,160</div>
<div class="t r td" style="left:673px;top:422.9px;">$1,765</div>
<div class="t r td" style="left:673px;top:447.8px;">$5,490</div>
<div class="t r td" style="left:673px;top:471.9px;">$77,793</div>
<div class="t r td" style="left:745.5px;top:373.1px;">$130,002</div>
<div class="t r td" style="left:745.5px;top:398px;">$310</div>
<div class="t r td" style="left:745.5px;top:422.9px;color:#e04a4a">($710)</div>
<div class="t r td" style="left:745.5px;top:447.8px;">$2,130</div>
<div class="t r td" style="left:745.5px;top:471.9px;">$55,293</div>
<svg class="a" style="left:490.4px;top:368.1px;" width="6.6" height="8.8" viewBox="0 0 6.6 8.8"><path d="M3.3 0L6.6 3.9H4.5V8.8H2.1V3.9H0z" fill="#2db87d"/></svg>
<svg class="a" style="left:490.4px;top:393.0px;transform:rotate(180deg);" width="6.6" height="8.8" viewBox="0 0 6.6 8.8"><path d="M3.3 0L6.6 3.9H4.5V8.8H2.1V3.9H0z" fill="#e05a5a"/></svg>
<svg class="a" style="left:490.4px;top:417.9px;" width="6.6" height="8.8" viewBox="0 0 6.6 8.8"><path d="M3.3 0L6.6 3.9H4.5V8.8H2.1V3.9H0z" fill="#2db87d"/></svg>
<svg class="a" style="left:490.4px;top:442.8px;" width="6.6" height="8.8" viewBox="0 0 6.6 8.8"><path d="M3.3 0L6.6 3.9H4.5V8.8H2.1V3.9H0z" fill="#2db87d"/></svg>
<svg class="a" style="left:490.4px;top:466.9px;" width="6.6" height="8.8" viewBox="0 0 6.6 8.8"><path d="M3.3 0L6.6 3.9H4.5V8.8H2.1V3.9H0z" fill="#2db87d"/></svg>
<svg class="a" style="left:295.4px;top:433.4px;" width="61" height="27" viewBox="0 0 61 27"><rect x="1.5" y="1.5" width="57.8" height="23.6" fill="none" stroke="#2db87d" stroke-width="0.85" stroke-dasharray="2.2 1.7"/></svg>
<div class="a" style="left:296.4px;top:430.4px;width:32.8px;height:8.4px;background:#2db87d"></div>
<div class="t c " style="left:312.8px;top:434.7px;font-size:6.6px;color:#fff">Carla</div>
<div class="a" style="left:353.6px;top:457.2px;width:2px;height:2px;background:#2db87d"></div>
<div class="t c td" style="left:324.2px;top:447.8px;">1</div>
<div class="a" style="left:326.2px;top:445.4px;width:0.8px;height:4.8px;background:#333"></div>
<svg class="a" style="left:363.4px;top:463px;" width="6" height="9" viewBox="0 0 6 9"><path d="M0.5 0.3V7.2L2.2 5.6L3.4 8.4L4.6 7.9L3.4 5.2H5.6z" fill="#111" stroke="#fff" stroke-width="0.4"/></svg>
<div class="a" style="left:11px;top:501px;width:859px;height:20.5px;background:#efefef"></div>
<div class="a" style="left:11px;top:501px;width:17px;height:20.5px;background:#e3e3e3"></div>
<svg class="a" style="left:14.4px;top:506.8px;" width="11" height="10" viewBox="0 0 11 10"><path d="M1.4 0.6H9.2Q10.2 0.6 10.2 1.6V5.6Q10.2 6.6 9.2 6.6H4.4L1.8 8.8V6.6H1.4Q0.5 6.6 0.5 5.6V1.6Q0.5 0.6 1.4 0.6z" fill="none" stroke="#999" stroke-width="0.7"/>
<circle cx="3.2" cy="3.6" r="0.5" fill="#999"/><circle cx="5.3" cy="3.6" r="0.5" fill="#999"/><circle cx="7.4" cy="3.6" r="0.5" fill="#999"/></svg>
<svg class="a" style="left:33.8px;top:509.6px;" width="5.4" height="3.6" viewBox="0 0 5.4 3.6"><path d="M0 3.6L2.7 0L5.4 3.6z" fill="#666"/></svg>
<svg class="a" style="left:49.2px;top:507.8px;" width="8" height="8" viewBox="0 0 8 8"><path d="M4 0.4V7.6M0.4 4H7.6" stroke="#1f9d50" stroke-width="1.5"/></svg>
<div class="a" style="left:62.8px;top:501px;width:44.4px;height:20.5px;background:#fff"></div>
<div class="t c " style="left:83.5px;top:512.3px;font-size:7.1px;color:#333">Sheet 1</div>
<div class="t c " style="left:127.9px;top:512.3px;font-size:7.1px;color:#555">Sheet 2</div>
<div class="a" style="left:151px;top:501px;width:1px;height:20.5px;background:#e4e4e4"></div>
<div class="a" style="left:759.2px;top:501px;width:12px;height:20.5px;background:#f4f4f4"></div>
<div class="a" style="left:764.4px;top:514.2px;width:2.6px;height:0.9px;background:#555"></div>
</div></div>
<div class="a" style="left:765.7px;top:106.6px;width:200.4px;height:425.1px;background:#fff;border-radius:26px;box-shadow:0 0 0 0.6px #e6e6e6"></div>
<div class="a" style="left:841.3px;top:126.8px;width:48.7px;height:7px;background:#e9e9e9;border-radius:3.5px"></div>
<div class="a" style="left:849.9px;top:487.9px;width:32.2px;height:32.2px;background:#e9e9e9;border-radius:50%"></div>
<div class="a" style="left:772.2px;top:147.7px;width:186.3px;height:334.1px;overflow:hidden;background:#fff;border:1px solid #e0e0e0">
<div class="a" style="will-change:transform;left:-773.2px;top:-148.7px;width:970px;height:535px">
<div class="a" style="left:773px;top:161.6px;width:186px;height:43.8px;background:#fbfbfb"></div>
<div class="a" style="left:787.2px;top:190.6px;width:172px;height:14.8px;background:#fff"></div>
<div class="a" style="left:773px;top:204.9px;width:186px;height:1px;background:#e2e2e2"></div>
<div class="a" style="left:786.6px;top:190.6px;width:0.8px;height:14.4px;background:#e2e2e2"></div>
<svg class="a" style="left:776.2px;top:151px;" width="9" height="5.4" viewBox="0 0 9 5.4"><g fill="#111"><rect x="0" y="4" width="1.5" height="1.4"/><rect x="2.2" y="3" width="1.5" height="2.4"/><rect x="4.4" y="1.4" width="1.6" height="4"/><rect x="6.6" y="0" width="1.6" height="5.4"/></g></svg>
<svg class="a" style="left:786.6px;top:151.2px;" width="7.4" height="5" viewBox="0 0 7.4 5"><path d="M0.3 1.6Q3.7 -1.2 7.1 1.6L6.2 2.5Q3.7 0.5 1.2 2.5zM1.9 3.2Q3.7 1.8 5.5 3.2L3.7 5z" fill="#111"/></svg>
<div class="a" style="left:944px;top:152.2px;width:9px;height:3.4px;background:#111;border-radius:0.6px"></div>
<div class="t c pt" style="left:865.3px;top:168.6px;">My Stocks HP</div>
<svg class="a" style="left:780.8px;top:178.2px;" width="5" height="7.6" viewBox="0 0 5 7.6"><path d="M4.2 0.5L1 3.8L4.2 7.1" fill="none" stroke="#111" stroke-width="0.95"/></svg>
<svg class="a" style="left:799.6px;top:178.6px;" width="7" height="7" viewBox="0 0 7 7"><path d="M0.8 2.4H4.2A2 2 0 0 1 4.2 6.4H2.4M2.4 0.8L0.8 2.4L2.4 4" fill="none" stroke="#ccc" stroke-width="0.7"/></svg>
<div class="t c " style="left:884.6px;top:182.2px;font-size:7.4px;color:#111;font-style:italic;font-weight:bold">A</div>
<svg class="a" style="left:886.2px;top:178.4px;" width="5.4" height="7" viewBox="0 0 5.4 7"><path d="M4.8 0.6L1 6.2L0.6 6.6" stroke="#111" stroke-width="0.9" fill="none"/></svg>
<svg class="a" style="left:901.6px;top:178.2px;" width="8.4" height="7.6" viewBox="0 0 8.4 7.6"><circle cx="3.8" cy="2" r="1.6" fill="none" stroke="#111" stroke-width="0.85"/><path d="M0.6 7V6.2Q0.6 4.4 3.8 4.4Q5.4 4.4 6.2 5M0.6 7H5" fill="none" stroke="#111" stroke-width="0.85"/><path d="M5.2 5.8H8M6.6 4.4V7.2" stroke="#111" stroke-width="0.7"/></svg>
<svg class="a" style="left:920.6px;top:178.6px;" width="8.4" height="7.6" viewBox="0 0 8.4 7.6"><path d="M0.5 0.5H7.9V4.8H4.6L3 6.8V4.8H0.5z" fill="none" stroke="#111" stroke-width="0.9" stroke-linejoin="round"/><path d="M4.4 3.6L6 2.2" fill="none" stroke="#111" stroke-width="0.6"/></svg>
<svg class="a" style="left:939.8px;top:181.6px;" width="8" height="1.4" viewBox="0 0 8 1.4"><circle cx="0.7" cy="0.7" r="0.7" fill="#111"/><circle cx="3.6" cy="0.7" r="0.7" fill="#111"/><circle cx="6.5" cy="0.7" r="0.7" fill="#111"/></svg>
<div class="t c " style="left:780px;top:197.8px;font-size:7.6px;color:#222;font-style:italic;font-family:'Liberation Serif',serif;font-weight:bold;letter-spacing:-0.3px">fx</div>
<div class="t l " style="left:791.5px;top:198.5px;font-size:6.05px;color:#a8a8a8">Enter text or formula</div>
<svg class="a" style="left:944.8px;top:196.4px;" width="5.4" height="3.4" viewBox="0 0 5.4 3.4"><path d="M0.4 0.4L2.7 2.8L5 0.4" fill="none" stroke="#111" stroke-width="0.95"/></svg>
<div class="t c b" style="left:870.7px;top:219px;font-size:8.1px;color:#333">Stock Tracker</div>
<svg class="a" style="left:0;top:0" width="970" height="535"><path d="M835.94 231.16A45 45 0 1 1 787.31 271.61L804.03 273.25A28.2 28.2 0 1 0 834.51 247.90z" fill="#2243d4"/><path d="M787.29 271.92A45 45 0 0 1 789.21 262.39L805.22 267.47A28.2 28.2 0 0 0 804.02 273.44z" fill="#2eeef0"/><path d="M789.11 262.69A45 45 0 0 1 791.86 255.85L806.88 263.37A28.2 28.2 0 0 0 805.16 267.66z" fill="#5a3cf4"/><path d="M791.72 256.13A45 45 0 0 1 836.18 231.19L834.66 247.92A28.2 28.2 0 0 0 806.80 263.55z" fill="#071145"/></svg>
<div class="t c b" style="left:831.9px;top:276.8px;font-size:8.4px;color:#111">$208,484</div>
<div class="a" style="left:889.1px;top:256.2px;width:5px;height:5px;background:#2243d4;border-radius:50%"></div>
<div class="t l " style="left:897.8px;top:259.4px;font-size:7.1px;color:#222">IT</div>
<div class="a" style="left:889.1px;top:270.4px;width:5px;height:5px;background:#5a3cf4;border-radius:50%"></div>
<div class="t l " style="left:897.8px;top:273.59999999999997px;font-size:7.1px;color:#222">Telecom</div>
<div class="a" style="left:889.1px;top:283.8px;width:5px;height:5px;background:#2eeef0;border-radius:50%"></div>
<div class="t l " style="left:897.8px;top:287.0px;font-size:7.1px;color:#222">HealthCare</div>
<div class="a" style="left:889.1px;top:298.8px;width:5px;height:5px;background:#071145;border-radius:50%"></div>
<div class="t l " style="left:897.8px;top:302.0px;font-size:7.1px;color:#222">Industrials</div>
<div class="a" style="left:817.1px;top:358.6px;width:58.9px;height:106px;background:#effff4"></div>
<div class="a" style="left:941px;top:358.6px;width:19px;height:106px;background:#effff4"></div>
<div class="a" style="left:773px;top:334.1px;width:186px;height:24.6px;background:#071145"></div>
<div class="t r th" style="left:794.2px;top:346.9px;">Symbol</div>
<div class="t c th" style="left:846.1px;top:346.9px;">No. Of Shares</div>
<div class="t c th" style="left:908.4px;top:346.9px;">Avg. Cost Price</div>
<div class="t l th" style="left:949px;top:346.9px;">Market Price</div>
<div class="t l td" style="left:768.6px;top:372.4px;">GOOG</div>
<div class="t c td" style="left:846.5px;top:371.9px;">75</div>
<div class="t r td" style="left:930.6px;top:372.09999999999997px;">$950</div>
<div class="t l td" style="left:768.6px;top:397.2px;">AAPL</div>
<div class="t c td" style="left:846.5px;top:396.7px;">50</div>
<div class="t r td" style="left:930.6px;top:396.9px;">$157</div>
<div class="t l td" style="left:768.6px;top:421.2px;">T</div>
<div class="t c td" style="left:846.5px;top:420.7px;">75</div>
<div class="t r td" style="left:930.6px;top:420.9px;">$33</div>
<div class="t l td" style="left:768.6px;top:446px;">PFE</div>
<div class="t c td" style="left:846.5px;top:445.5px;"></div>
<div class="t r td" style="left:930.6px;top:445.7px;">$28</div>
<svg class="a" style="left:816.3px;top:430.9px;" width="61" height="27" viewBox="0 0 61 27"><rect x="1.5" y="1.5" width="57.2" height="23.6" fill="#ecfff3" stroke="#2db87d" stroke-width="0.85" stroke-dasharray="2.2 1.7"/></svg>
<div class="a" style="left:817.3px;top:428.9px;width:32.4px;height:8px;background:#2db87d"></div>
<div class="t c " style="left:833.4px;top:433px;font-size:6.4px;color:#fff">Carla</div>
<div class="a" style="left:873.8px;top:455.4px;width:2px;height:2px;background:#2db87d"></div>
<div class="a" style="left:846.8px;top:443.6px;width:0.8px;height:4.8px;background:#333"></div>
<div class="t c td" style="left:844.8px;top:446px;">1</div>
<div class="a" style="left:873.2px;top:403.8px;width:24px;height:24px;background:#ececec;border-radius:50%;border:0.6px solid #e0e0e0"></div>
<div class="a" style="left:773px;top:463.9px;width:186px;height:18px;background:#ececec"></div>
<div class="a" style="left:776.7px;top:463.9px;width:39.4px;height:18px;background:#fff;border-radius:3px 3px 0 0"></div>
<div class="t c " style="left:796.5px;top:473.1px;font-size:6.2px;color:#333">Portfolio</div>
<div class="t c " style="left:847.6px;top:473.1px;font-size:6.5px;color:#777">Instructions</div>
<div class="t c " style="left:896.7px;top:473.1px;font-size:6.1px;color:#777">Sheet1</div>
<div class="a" style="left:875.2px;top:465px;width:0.8px;height:8px;background:#d8d8d8"></div>
<div class="a" style="left:940.6px;top:465.4px;width:15.4px;height:15.4px;background:#fff;border-radius:50%"></div>
<svg class="a" style="left:945px;top:470px;" width="6" height="6" viewBox="0 0 6 6"><path d="M3 0V6M0 3H6" stroke="#2e9a5c" stroke-width="0.8"/></svg>
</div></div>
</body></html>
